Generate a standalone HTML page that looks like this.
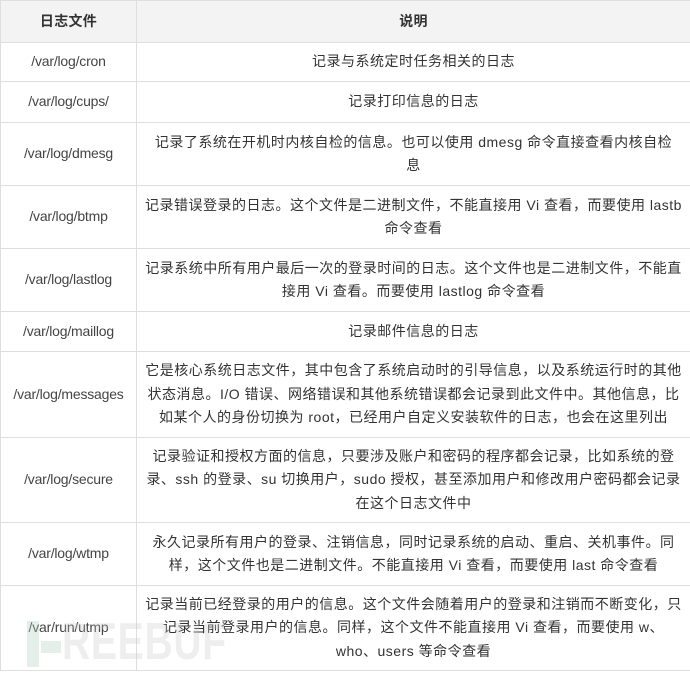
<!DOCTYPE html>
<html><head><meta charset="utf-8"><style>
html,body{margin:0;padding:0;background:#fff;width:690px;height:673px;overflow:hidden}
body{font-family:"Liberation Sans","Noto Sans CJK SC",sans-serif;color:#333;font-size:14px;position:relative}
table{border-collapse:collapse;position:absolute;left:0;top:0;width:690px;table-layout:fixed}
td,th{border:1px solid #dedede;text-align:center;vertical-align:middle;padding:0 4px;line-height:23.5px;white-space:nowrap;letter-spacing:0.5px}
th{background:#f3f3f3;font-weight:bold;height:41px;color:#333;letter-spacing:0.3px}
td.a{color:#444;letter-spacing:-0.2px}
.wm{position:absolute;left:0;top:0;width:690px;height:673px}
.g1{position:absolute;left:27px;top:621px;width:12px;height:46px;background:rgba(175,210,190,0.35)}
.g2{position:absolute;left:41px;top:641px;width:20px;height:12px;background:rgba(175,210,190,0.35)}
.t{position:absolute;left:62px;top:614px;font-family:"Liberation Sans",sans-serif;font-weight:bold;font-size:52px;line-height:56px;color:rgba(200,200,200,0.3);transform:scaleX(0.75);transform-origin:left top;letter-spacing:1px}
</style></head><body>
<table>
<colgroup><col style="width:136px"><col style="width:554px"></colgroup>
<tr><th>日志文件</th><th>说明</th></tr>
<tr style="height:39px"><td class="a">/var/log/cron</td><td>记录与系统定时任务相关的日志</td></tr>
<tr style="height:41px"><td class="a">/var/log/cups/</td><td>记录打印信息的日志</td></tr>
<tr style="height:63px"><td class="a">/var/log/dmesg</td><td>记录了系统在开机时内核自检的信息。也可以使用 dmesg 命令直接查看内核自检<br>息</td></tr>
<tr style="height:63px"><td class="a">/var/log/btmp</td><td>记录错误登录的日志。这个文件是二进制文件，不能直接用 Vi 查看，而要使用 lastb<br>命令查看</td></tr>
<tr style="height:63px"><td class="a">/var/log/lastlog</td><td>记录系统中所有用户最后一次的登录时间的日志。这个文件也是二进制文件，不能直<br>接用 Vi 查看。而要使用 lastlog 命令查看</td></tr>
<tr style="height:40px"><td class="a">/var/log/maillog</td><td>记录邮件信息的日志</td></tr>
<tr style="height:86px"><td class="a">/var/log/messages</td><td>它是核心系统日志文件，其中包含了系统启动时的引导信息，以及系统运行时的其他<br>状态消息。I/O 错误、网络错误和其他系统错误都会记录到此文件中。其他信息，比<br>如某个人的身份切换为 root，已经用户自定义安装软件的日志，也会在这里列出</td></tr>
<tr style="height:85px"><td class="a">/var/log/secure</td><td>记录验证和授权方面的信息，只要涉及账户和密码的程序都会记录，比如系统的登<br>录、ssh 的登录、su 切换用户，sudo 授权，甚至添加用户和修改用户密码都会记录<br>在这个日志文件中</td></tr>
<tr style="height:63px"><td class="a">/var/log/wtmp</td><td>永久记录所有用户的登录、注销信息，同时记录系统的启动、重启、关机事件。同<br>样，这个文件也是二进制文件。不能直接用 Vi 查看，而要使用 last 命令查看</td></tr>
<tr style="height:85px"><td class="a">/var/run/utmp</td><td>记录当前已经登录的用户的信息。这个文件会随着用户的登录和注销而不断变化，只<br>记录当前登录用户的信息。同样，这个文件不能直接用 Vi 查看，而要使用 w、<br>who、users 等命令查看</td></tr>
</table>
<div class="wm"><div class="g1"></div><div class="g2"></div><div class="t">REEBUF</div></div>
</body></html>
